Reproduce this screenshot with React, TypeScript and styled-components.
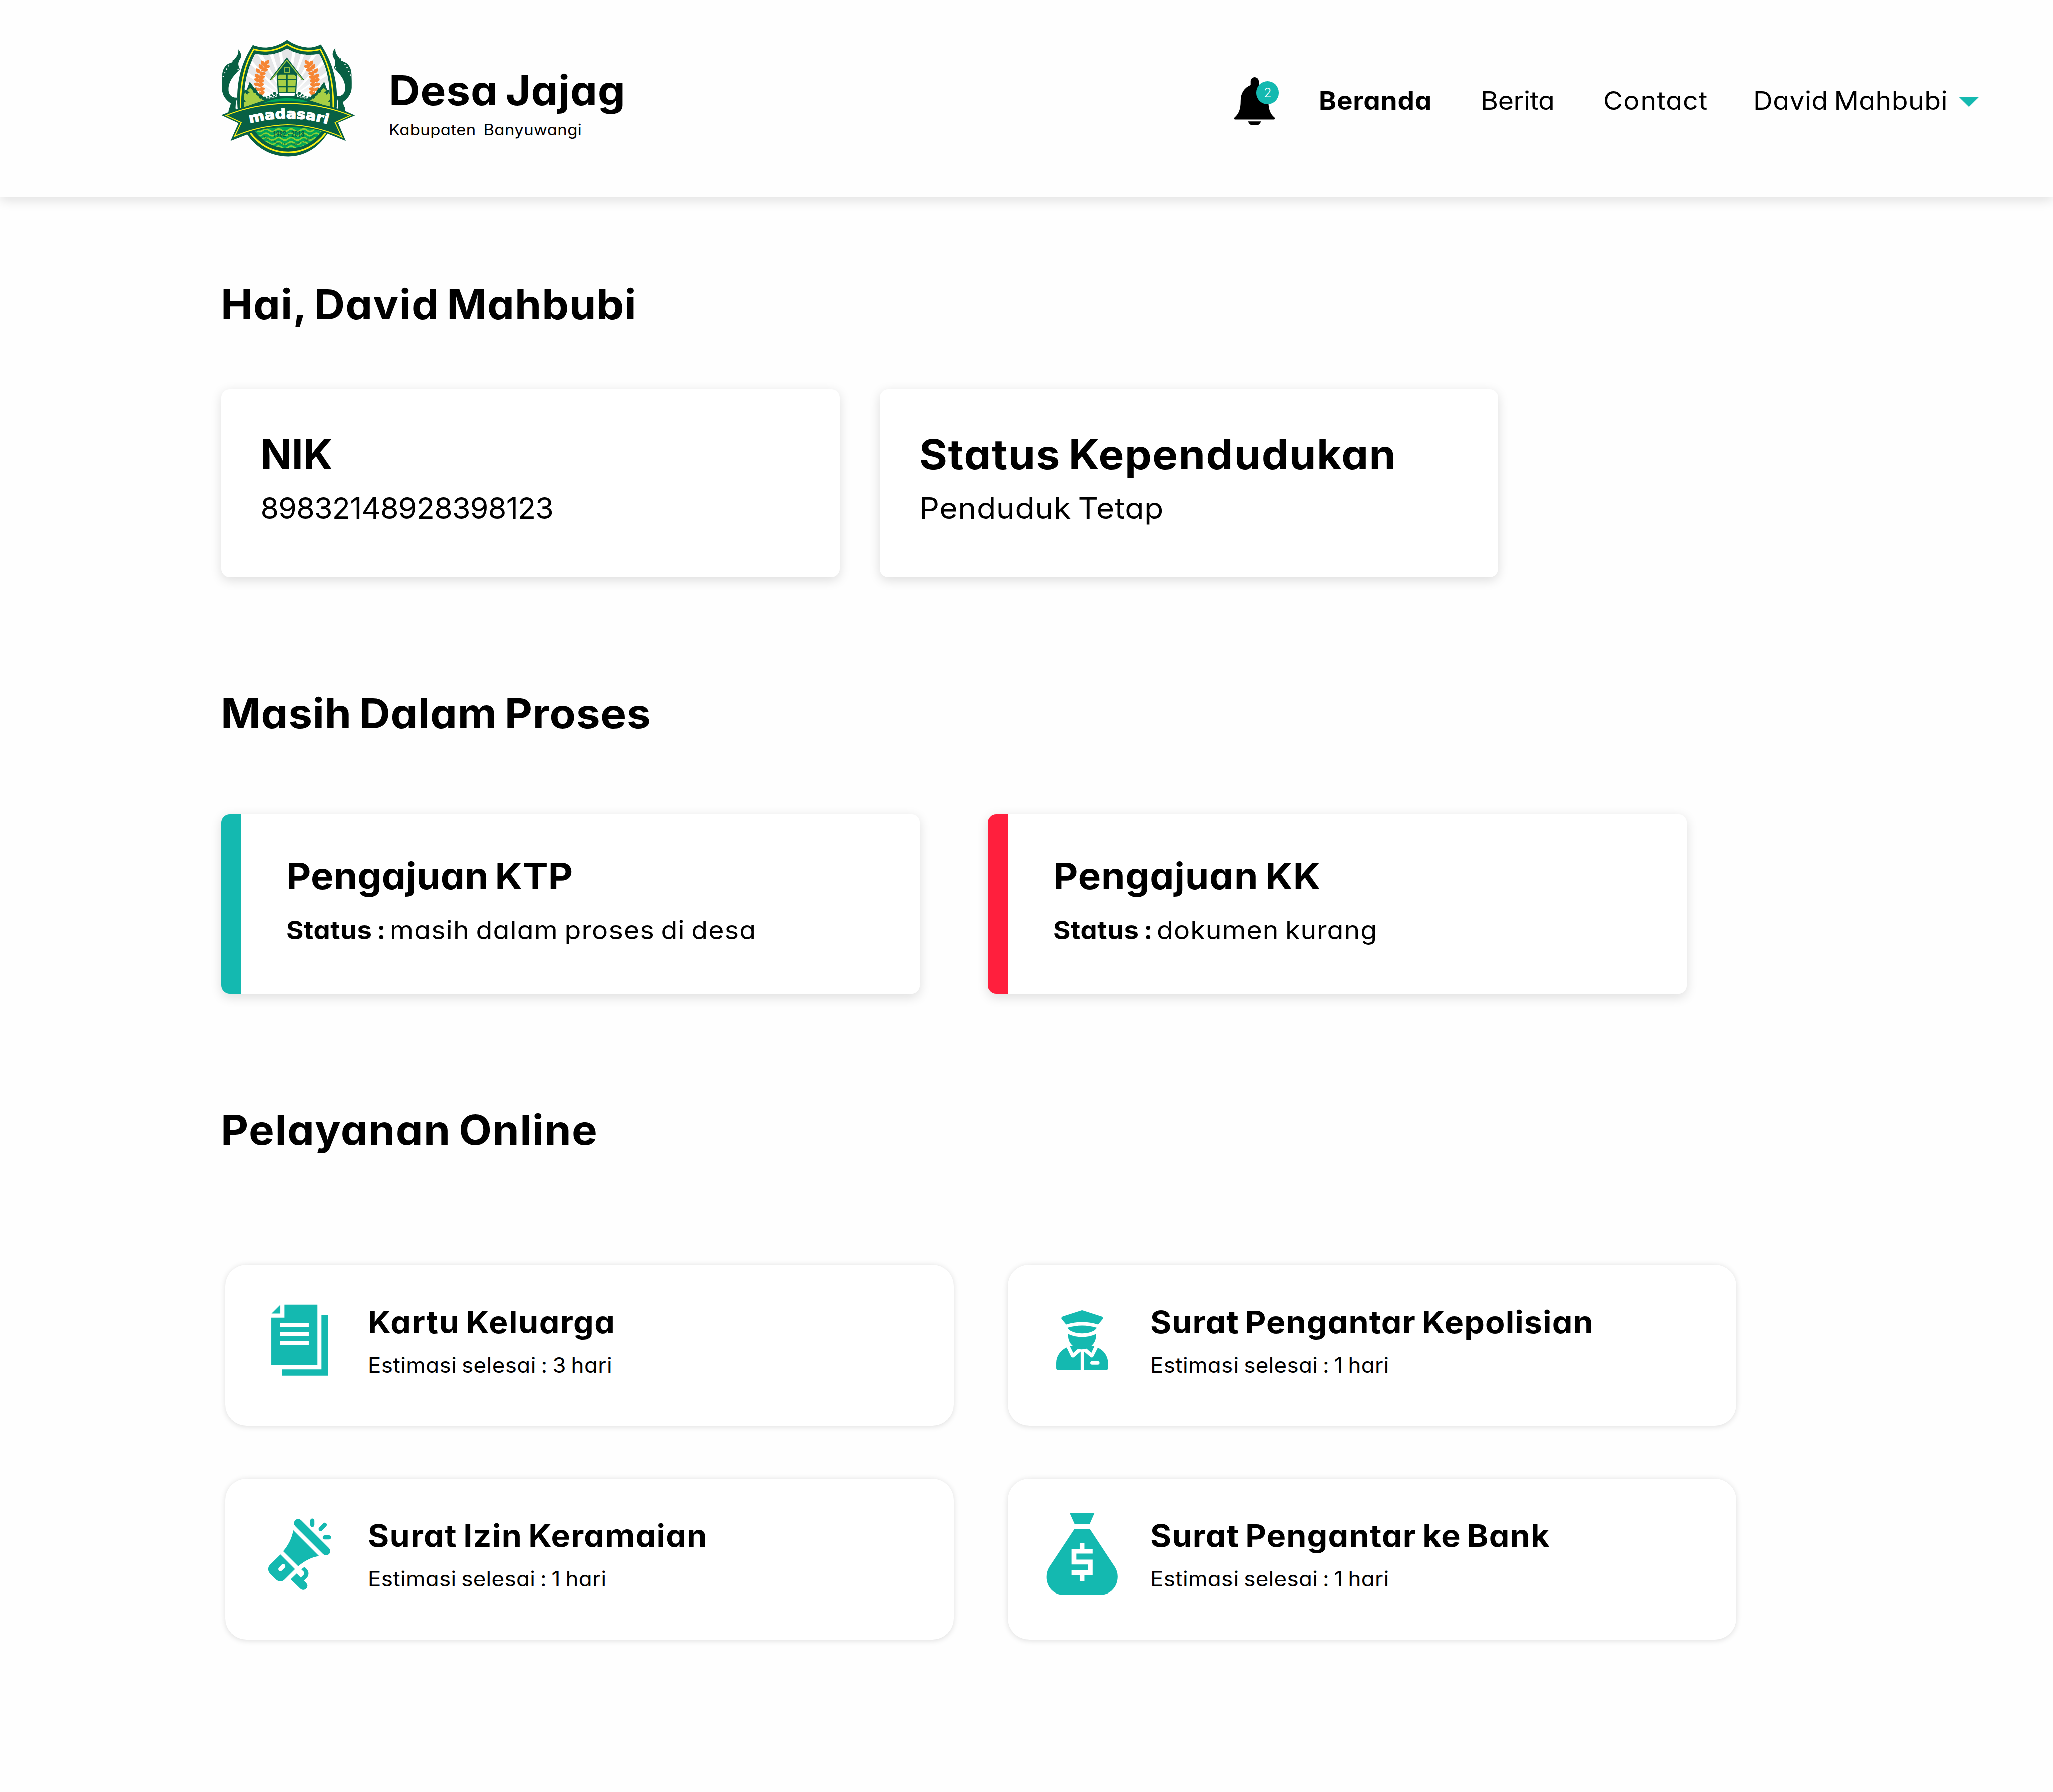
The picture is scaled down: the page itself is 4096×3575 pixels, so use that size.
import React from 'react';
import styled, { createGlobalStyle, css } from 'styled-components';

/* The design is drawn on a 1440-wide grid; u() turns grid units into pixels. */
const UNIT = 4096 / 1440;
const u = (n: number) => `${+(n * UNIT).toFixed(3)}px`;

const TEAL = '#14b9b0';
const RED = '#ff1f3d';
const SHADOW = `0 ${u(2)} ${u(8)} rgba(0, 0, 0, 0.135)`;

const GlobalStyle = createGlobalStyle`
  *, *::before, *::after { box-sizing: border-box; }
  html, body { margin: 0; padding: 0; background: #fefefe; }
  body {
    color: #000;
    font-family: Inter, 'Open Sans', sans-serif;
    font-feature-settings: 'cv11';
  }
  h1, h2, h3, p { margin: 0; }
  svg { display: block; }
`;

/* ---------- shared ---------- */

type TypeProps = { $track: number; $wide?: number };

/* Wide geometric setting: slightly extended letters with narrow word spaces. */
const extended = (wide: number) => css<TypeProps>`
  width: max-content;
  letter-spacing: ${(p) => p.$track}em;
  word-spacing: -0.07em;
  white-space: nowrap;
  transform: scaleX(${(p) => p.$wide ?? wide});
  transform-origin: left center;
`;

const Page = styled.div`
  width: ${u(1440)};
  min-height: 3575px;
  overflow: hidden;
`;

const Title = styled.h2<TypeProps>`
  ${extended(1.04)}
  font-size: ${u(28.9)};
  line-height: ${u(42)};
  font-weight: 700;
`;

/* ---------- header ---------- */

const Header = styled.header`
  display: flex;
  align-items: flex-start;
  justify-content: space-between;
  height: ${u(138)};
  padding: 0 ${u(52.1)} 0 ${u(155)};
  background: #fefefe;
  box-shadow: ${SHADOW};
`;

const Brand = styled.div`
  display: flex;
  align-items: flex-start;
  gap: ${u(23.7)};
  padding-top: ${u(27.5)};
`;

const BrandText = styled.div`
  padding-top: ${u(18)};
`;

const BrandName = styled.h1<TypeProps>`
  ${extended(1.04)}
  font-size: ${u(28.9)};
  line-height: ${u(36)};
  font-weight: 700;
`;

const BrandSub = styled.p<TypeProps>`
  ${extended(1.06)}
  margin-top: ${u(2.6)};
  font-size: ${u(10.9)};
  line-height: ${u(14)};
  white-space: pre;
`;

const Nav = styled.nav`
  display: grid;
  grid-template-columns: ${u(59.3)} ${u(113.6)} ${u(86.1)} ${u(104.9)} ${u(144.6)} ${u(13.7)};
  align-items: start;
  padding-top: ${u(54)};
`;

const NavItem = styled.a<TypeProps & { $active?: boolean }>`
  ${extended(1.06)}
  margin-top: ${u(2.5)};
  font-size: ${u(17.8)};
  line-height: ${u(28)};
  font-weight: ${(p) => (p.$active ? 700 : 400)};
`;

const BellButton = styled.div`
  position: relative;
  width: ${u(31.4)};
  height: ${u(34)};
`;

const Badge = styled.span`
  position: absolute;
  left: ${u(15.3)};
  top: ${u(3)};
  display: flex;
  align-items: center;
  justify-content: center;
  width: ${u(16)};
  height: ${u(16)};
  border-radius: 50%;
  background: ${TEAL};
  color: #fff;
  font-size: ${u(9)};
  font-weight: 300;
`;

const Caret = styled.span`
  width: ${u(13.7)};
  height: ${u(6.8)};
  margin-top: ${u(14.2)};
  background: ${TEAL};
  clip-path: polygon(0 0, 100% 0, 50% 100%);
`;

/* ---------- content ---------- */

const Main = styled.main`
  display: flex;
  flex-direction: column;
  padding: ${u(54.7)} ${u(155)} 0;
`;

const Section = styled.section<{ $gap: number }>`
  display: flex;
  flex-direction: column;
  gap: ${(p) => u(p.$gap)};
  margin-bottom: ${u(74.6)};
`;

const SectionTitle = styled(Title)`
  margin-left: ${u(-0.3)};
`;

const CardRow = styled.div<{ $gap: number }>`
  display: flex;
  gap: ${(p) => u(p.$gap)};
`;

const InfoCard = styled.article`
  width: ${u(434)};
  height: ${u(132)};
  padding: ${u(24.7)} ${u(27.6)};
  border-radius: ${u(6)};
  background: #fff;
  box-shadow: ${SHADOW};
`;

const InfoValue = styled.p<TypeProps>`
  ${extended(1.06)}
  margin-top: ${u(1.8)};
  font-size: ${u(20.8)};
  line-height: ${u(30)};
`;

const ProcessCard = styled.article<{ $accent: string }>`
  display: flex;
  width: ${u(490)};
  height: ${u(126)};
  border-radius: ${u(6)};
  overflow: hidden;
  background: linear-gradient(to right, ${(p) => p.$accent} ${u(14)}, #fff ${u(14)});
  box-shadow: ${SHADOW};
`;

const ProcessBody = styled.div`
  padding: ${u(24.7)} 0 0 ${u(45.7)};
`;

const ProcessTitle = styled.h3<TypeProps>`
  ${extended(1.04)}
  font-size: ${u(25.8)};
  line-height: ${u(38)};
  font-weight: 700;
`;

const StatusLine = styled.p`
  display: grid;
  grid-template-columns: ${u(72.7)} auto;
  margin-top: ${u(4.9)};
  font-size: ${u(17.8)};
  line-height: ${u(28)};
`;

const StatusLabel = styled.strong<TypeProps>`
  ${extended(1.04)}
  font-weight: 700;
`;

const StatusValue = styled.span<TypeProps>`
  ${extended(1.06)}
`;

const ServiceGrid = styled.div`
  display: grid;
  grid-template-columns: repeat(2, ${u(511)});
  grid-auto-rows: ${u(113)};
  gap: ${u(37)} ${u(38)};
  margin-left: ${u(3)};
`;

const ServiceCard = styled.article`
  display: flex;
  align-items: flex-start;
  padding-left: ${u(18)};
  border-radius: ${u(15)};
  background: #fff;
  box-shadow: 0 ${u(0.4)} ${u(4)} rgba(0, 0, 0, 0.13);
`;

const IconSlot = styled.div`
  width: ${u(75)};
  height: ${u(80)};
  margin: ${u(13)} ${u(6.9)} 0 0;
  flex: none;
`;

const ServiceBody = styled.div`
  padding-top: ${u(24.1)};
`;

const ServiceTitle = styled.h3<TypeProps>`
  ${extended(1.05)}
  font-size: ${u(21.6)};
  line-height: ${u(32)};
  font-weight: 700;
`;

const Estimate = styled.p<TypeProps>`
  ${extended(1.05)}
  margin-top: ${u(3.6)};
  font-size: ${u(14.7)};
  line-height: ${u(22)};
`;

/* ---------- icons ---------- */

const BellIcon = () => (
  <svg width={28.5 * UNIT} height={34 * UNIT} viewBox="0 0 114 136">
    <path d="M57.3 0C51 0 46 5 46 12V22C28 29 18 45 18 66C18 92 12 103 1 113C-1 116 0 119 3 119H111C114 119 115 116 113 113C102 103 96 92 96 66C96 45 87 29 69 22V12C69 5 64 0 57.3 0Z" />
    <path d="M39 124H75C73 132 66 136 57 136C48 136 41 132 39 124Z" />
  </svg>
);

const Glyph = ({ x = 0, children }: { x?: number; children: React.ReactNode }) => (
  <svg width="100%" height="100%" viewBox={`${x} 0 900 960`} fill={TEAL} fillRule="evenodd">
    {children}
  </svg>
);

const DocumentIcon = () => (
  <Glyph x={12}>
    <path d="M257 181V255H183Z" />
    <path d="M292 180H570V691H181V290H292ZM255 335V370H497V335ZM255 409V445H497V409ZM255 485V520H497V485Z" />
    <path d="M604 268H659V779H270V727H604Z" />
  </Glyph>
);

const OfficerIcon = () => (
  <Glyph>
    <path d="M403 228.500Q408 226.500 413 228.500L570 279C583 284 587 295 580 304L543 348Q408 306 274 348L237 304C230 295 234 284 246 279Z" />
    <path d="M284 376Q408 338 533 376C510 410 460 423 408 423C356 423 306 410 284 376Z" />
    <path d="M291 428Q345 453 408 453Q470 453 525 428V445C525 478 510 508 486 528L512 531L486 588L446 552Q408 562 373 554L333 588L305 531L330 528C305 508 291 478 291 445Z" />
    <path d="M278 542L315 618Q325 633 340 623L396 576V732H206Q190 731 190 716V672C191 615 225 565 278 542Z" />
    <path d="M541 543C592 567 626 615 627 672V716Q626 731 611 732H425V576L480 623Q495 632 503 618ZM492 657A15 15 0 0 0 492 687H540A15 15 0 0 0 540 657Z" />
  </Glyph>
);

const MegaphoneIcon = () => (
  <Glyph x={12}>
    <g stroke={TEAL} strokeLinecap="round">
      <path d="M408 219L643 454" strokeWidth="71" />
      <path d="M527 197V233M632 232L597 268M632 338H668" strokeWidth="35" />
    </g>
    <path d="M366 277L584 496C520 505 460 537 408 581L281 455C325 402 358 340 366 277Z" />
    <path d="M258 482L381 605L295 691Q280 708 258 708Q236 708 220 692L170 642Q155 625 155 605Q155 584 170 568Z" />
    <path d="M282 580L258 605" stroke="#fff" strokeWidth="36" strokeLinecap="round" />
    <path d="M395 642L430 677L455 652Q464 640 455 628L434 607L461 586L481 606Q495 622 495 640Q495 662 481 677L456 702L474 720Q486 732 486 744C486 765 470 780 450 780Q437 780 426 770L345 691Z" />
  </Glyph>
);

const MoneyBagIcon = () => (
  <Glyph>
    <path d="M303 132H513L471 228H346Z" />
    <path d="M344 267H473L686 590C700 612 708 640 708 668C708 755 645 823 560 823H256C170 823 108 755 108 672C108 640 116 614 130 590ZM388 385V435H319V566H456V616H319V657H388V705H428V657H497V525H360V475H497V435H428V385Z" />
  </Glyph>
);

/* ---------- village crest ---------- */

const DARK = '#086044';
const YELLOW = '#fff212';
const LIME = '#a8cf45';
const GREEN = '#00a859';
const ORANGE = '#f68634';

const RAYS: [number, number][] = [
  [-6, 6], [10, 17], [21, 29], [33, 42], [46, 55], [59, 68],
  [-17, -10], [-29, -21], [-42, -33], [-55, -46], [-68, -59],
];
const ray = (deg: number) => {
  const a = (deg * Math.PI) / 180;
  return `${615 + 700 * Math.sin(a)} ${570 - 700 * Math.cos(a)}`;
};

/* centre x, centre y, rotation, mirrored */
const LEAVES: [number, number, number, boolean][] = [
  [402, 516, -14, false],
  [357, 483, 18, true], [402, 482, 0, false],
  [360, 442, 10, true], [394, 446, -6, false],
  [363, 405, 18, true], [396, 414, -2, false],
  [365, 373, 30, true], [402, 381, 0, false],
  [371, 328, 46, true], [408, 351, 6, false],
  [393, 294, 54, true], [427, 319, 10, false],
  [410, 264, 62, true], [444, 291, 6, false],
  [445, 258, -34, false],
];

const Wheat = () => (
  <g fill={ORANGE}>
    <path d="M384 528C374 470 376 400 392 345C400 318 418 290 436 268" fill="none" stroke={ORANGE} strokeWidth="5" />
    {LEAVES.map(([x, y, r, flip], i) => (
      <path
        key={i}
        d="M-26 6C-23 -19 4 -24 27 -8C21 15 -6 22 -26 6Z"
        transform={`translate(${x} ${y}) scale(${flip ? -1 : 1} 1) rotate(${flip ? 10 - r : r})`}
      />
    ))}
  </g>
);

const Mountain = () => (
  <g>
    <path d="M238 640L242 520L250 487L257 481L269 491L278 478L300 419L332 462L338 474L350 474L358 490L380 524L402 527L413 545L432 543L442 560L462 575L400 606Z" fill={DARK} />
    <path d="M240 547L262 507L279 530L284 514L302 514L280 492L303 471L322 487L333 511L350 513L358 533L372 538L385 562L402 560L408 573L430 574Q335 602 255 635L239 583L270 593L254 570Z" fill={LIME} />
    <g fill="none" stroke={DARK} strokeWidth="6" strokeLinecap="round">
      <path d="M450 558C462 562 468 548 459 543M475 554C490 558 500 538 487 530M497 546C518 548 530 520 514 510" />
    </g>
    <g fill={DARK}>
      <circle cx="455" cy="546" r="7" />
      <circle cx="482" cy="533" r="9" />
      <circle cx="509" cy="517" r="12" />
    </g>
  </g>
);

const Horn = () => (
  <g>
    <path d="M204 145C227 172 233 202 220 225C203 250 196 275 217 313C180 352 123 405 121 478C118 530 150 558 196 552L183 592L180 640L188 674L120 676L124 648L134 628L140 601C102 574 70 540 66 482C65 430 66 405 69 350C74 310 95 280 122 267L154 254L157 232L167 235C182 212 208 195 204 145Z" fill={DARK} />
    <path d="M154 256L122 269Q76 300 70 380" fill="none" stroke={DARK} strokeWidth="6" strokeDasharray="5 5" />
    <g fill="#fff">
      <circle cx="122" cy="285" r="5" />
      <circle cx="105" cy="312" r="6" />
      <circle cx="90" cy="343" r="5" />
      <circle cx="77" cy="374" r="5.500" />
      <circle cx="202" cy="313" r="5.500" />
    </g>
  </g>
);

const wave = (y: number) => `M305 ${y}${' q26.500 -22 53 0 t53 0'.repeat(6)}`;

const Crest = () => (
  <svg width={94.2 * UNIT} height={82.5 * UNIT} viewBox="60 60 1130 990">
    <defs>
      <clipPath id="field">
        <path d="M345 183Q395 192 440 192Q530 190 615 140Q700 190 790 192Q840 192 885 183C950 285 978 420 980 640H250C244 470 275 310 345 183Z" />
      </clipPath>
      <clipPath id="sea">
        <path d="M345 836Q480 800 615 800Q775 800 907 836Q800 981 625 981Q450 977 345 836Z" />
      </clipPath>
      <linearGradient id="fade" x1="0" y1="140" x2="0" y2="560" gradientUnits="userSpaceOnUse">
        <stop offset="0" stopColor="#e3e4e6" />
        <stop offset="0.55" stopColor="#e6e7e9" />
        <stop offset="1" stopColor="#fbfbfb" />
      </linearGradient>
      <path id="nameArc" d="M300 768Q450 729 622 727Q800 727 980 782" />
      <path id="mottoArc" d="M402 872Q490 952 622 957Q755 952 856 866" />
    </defs>

    <Horn />
    <g transform="translate(1226 -12) scale(-1 1)">
      <Horn />
    </g>

    <path d="M615 66Q700 124 790 131Q850 130 900 104C980 225 1036 370 1036 560V600C1030 800 880 1049 625 1049C370 1049 200 830 195 600V560C195 370 245 235 326 108Q370 130 440 131Q530 126 615 66Z" fill={DARK} />
    <path d="M222 645C218 460 245 290 333 145Q380 160 440 158Q530 156 615 102Q700 156 790 158Q850 158 896 145C975 290 1008 440 1004 640" fill="none" stroke={YELLOW} strokeWidth="12" />
    <path d="M306 852C390 960 500 1015 625 1015C750 1015 860 955 940 852" fill="none" stroke={YELLOW} strokeWidth="14" />

    <g clipPath="url(#field)">
      <rect x="240" y="130" width="750" height="520" fill="#fff" />
      {RAYS.map(([a, b]) => (
        <path key={a} d={`M615 570L${ray(a)}L${ray(b)}Z`} fill="url(#fade)" />
      ))}
      <Wheat />
      <g transform="translate(1228 0) scale(-1 1)">
        <Wheat />
      </g>
      <Mountain />
      <g transform="translate(1228 0) scale(-1 1)">
        <Mountain />
      </g>
      <path d="M360 612Q460 540 615 540Q770 540 870 612Z" fill={DARK} />
      <path d="M414 598Q505 558 615 557Q725 558 806 594Q615 572 414 598Z" fill={GREEN} />
    </g>

    <path d="M527 350H701L692 523H700V548H527V523H537Z" fill={DARK} />
    <path d="M613 213L761 405H466Z M613 390" fill="none" />
    <path d="M613 213L761 405H741L705 357H524L487 405H466Z" fill={DARK} />
    <path d="M481 403L613 236L747 403" fill="none" stroke={LIME} strokeWidth="8" />
    <rect x="593" y="299" width="43" height="41" fill={DARK} stroke={LIME} strokeWidth="4" />
    <path d="M552 358H606V395H539L538 370ZM620 358H672L690 371L689 395H620ZM541 403H606V457H543ZM620 403H689L686 457H620ZM544 466H606V503H546ZM620 466H686L683 503H620Z" fill={LIME} />
    <path d="M547 511H682L677 541Q615 536 553 541Z" fill="#fff" />

    <path d="M60 700L130 672Q360 584 620 582Q880 584 1110 668L1188 702L1045 765L1110 917L955 855Q790 800 615 800Q450 802 290 858L138 917L205 768Z" fill={DARK} />
    <path d="M100 703L140 687Q370 604 620 601Q880 604 1110 687L1150 703L1020 762L1078 885Q850 785 620 781Q380 787 172 879L228 762Z" fill="none" stroke={YELLOW} strokeWidth="8" />

    <g clipPath="url(#sea)">
      <rect x="340" y="790" width="580" height="200" fill={GREEN} />
      {[828, 864, 900, 936, 972].map((y) => (
        <path key={y} d={wave(y)} fill="none" stroke="#8bd135" strokeWidth="13" />
      ))}
    </g>

    <text fontFamily="'DejaVu Sans', sans-serif" fontWeight="700" fontSize="112" fill="#fff" stroke="#fff" strokeWidth="6">
      <textPath href="#nameArc" textLength="665" lengthAdjust="spacingAndGlyphs">madasari</textPath>
    </text>
    <text x="495" y="882" fontFamily="Roboto, sans-serif" fontWeight="700" fontSize="69" fill={DARK} textLength="267" lengthAdjust="spacingAndGlyphs">
      1982 - 2018
    </text>
    <text fontFamily="'Open Sans', sans-serif" fontWeight="500" fontSize="31" fill={DARK}>
      <textPath href="#mottoArc" textLength="492" lengthAdjust="spacing">desa raharja tur nagara digjaya</textPath>
    </text>
  </svg>
);

/* ---------- data ---------- */

const services = [
  { icon: <DocumentIcon />, title: 'Kartu Keluarga', track: 0.0235, estimate: 'Estimasi selesai : 3 hari', estTrack: 0.0102 },
  { icon: <OfficerIcon />, title: 'Surat Pengantar Kepolisian', track: 0.017, estimate: 'Estimasi selesai : 1 hari', estTrack: 0.0082 },
  { icon: <MegaphoneIcon />, title: 'Surat Izin Keramaian', track: 0.0207, estimate: 'Estimasi selesai : 1 hari', estTrack: 0.0082 },
  { icon: <MoneyBagIcon />, title: 'Surat Pengantar ke Bank', track: 0.0183, estimate: 'Estimasi selesai : 1 hari', estTrack: 0.0082 },
];

export default function App() {
  return (
    <Page>
      <GlobalStyle />
      <Header>
        <Brand>
          <Crest />
          <BrandText>
            <BrandName $track={0.0093}>Desa Jajag</BrandName>
            <BrandSub $track={0.0134}>{'Kabupaten  Banyuwangi'}</BrandSub>
          </BrandText>
        </Brand>
        <Nav>
          <BellButton>
            <BellIcon />
            <Badge>2</Badge>
          </BellButton>
          <NavItem $active $wide={1.05} $track={0.0137}>Beranda</NavItem>
          <NavItem $track={-0.0089}>Berita</NavItem>
          <NavItem $track={0.019}>Contact</NavItem>
          <NavItem $track={0.0078}>David Mahbubi</NavItem>
          <Caret />
        </Nav>
      </Header>

      <Main>
        <Section $gap={38.3}>
          <SectionTitle $track={0.0128}>Hai, David Mahbubi</SectionTitle>
          <CardRow $gap={28}>
            <InfoCard>
              <Title $wide={1} $track={-0.0018}>NIK</Title>
              <InfoValue $wide={1} $track={-0.0124}>89832148928398123</InfoValue>
            </InfoCard>
            <InfoCard>
              <Title $track={0.0181}>Status Kependudukan</Title>
              <InfoValue $track={0.0083}>Penduduk Tetap</InfoValue>
            </InfoCard>
          </CardRow>
        </Section>

        <Section $gap={49.4}>
          <SectionTitle $track={0.0095}>Masih Dalam Proses</SectionTitle>
          <CardRow $gap={48}>
            <ProcessCard $accent={TEAL}>
              <ProcessBody>
                <ProcessTitle $track={0.0026}>Pengajuan KTP</ProcessTitle>
                <StatusLine>
                  <StatusLabel $track={0.0115}>Status :</StatusLabel>
                  <StatusValue $track={0.0223}>masih dalam proses di desa</StatusValue>
                </StatusLine>
              </ProcessBody>
            </ProcessCard>
            <ProcessCard $accent={RED}>
              <ProcessBody>
                <ProcessTitle $track={0.0109}>Pengajuan KK</ProcessTitle>
                <StatusLine>
                  <StatusLabel $track={0.0115}>Status :</StatusLabel>
                  <StatusValue $track={0.0195}>dokumen kurang</StatusValue>
                </StatusLine>
              </ProcessBody>
            </ProcessCard>
          </CardRow>
        </Section>

        <Section $gap={73.4}>
          <SectionTitle $track={0.0167}>Pelayanan Online</SectionTitle>
          <ServiceGrid>
            {services.map((s) => (
              <ServiceCard key={s.title}>
                <IconSlot>{s.icon}</IconSlot>
                <ServiceBody>
                  <ServiceTitle $track={s.track}>{s.title}</ServiceTitle>
                  <Estimate $track={s.estTrack}>{s.estimate}</Estimate>
                </ServiceBody>
              </ServiceCard>
            ))}
          </ServiceGrid>
        </Section>
      </Main>
    </Page>
  );
}
